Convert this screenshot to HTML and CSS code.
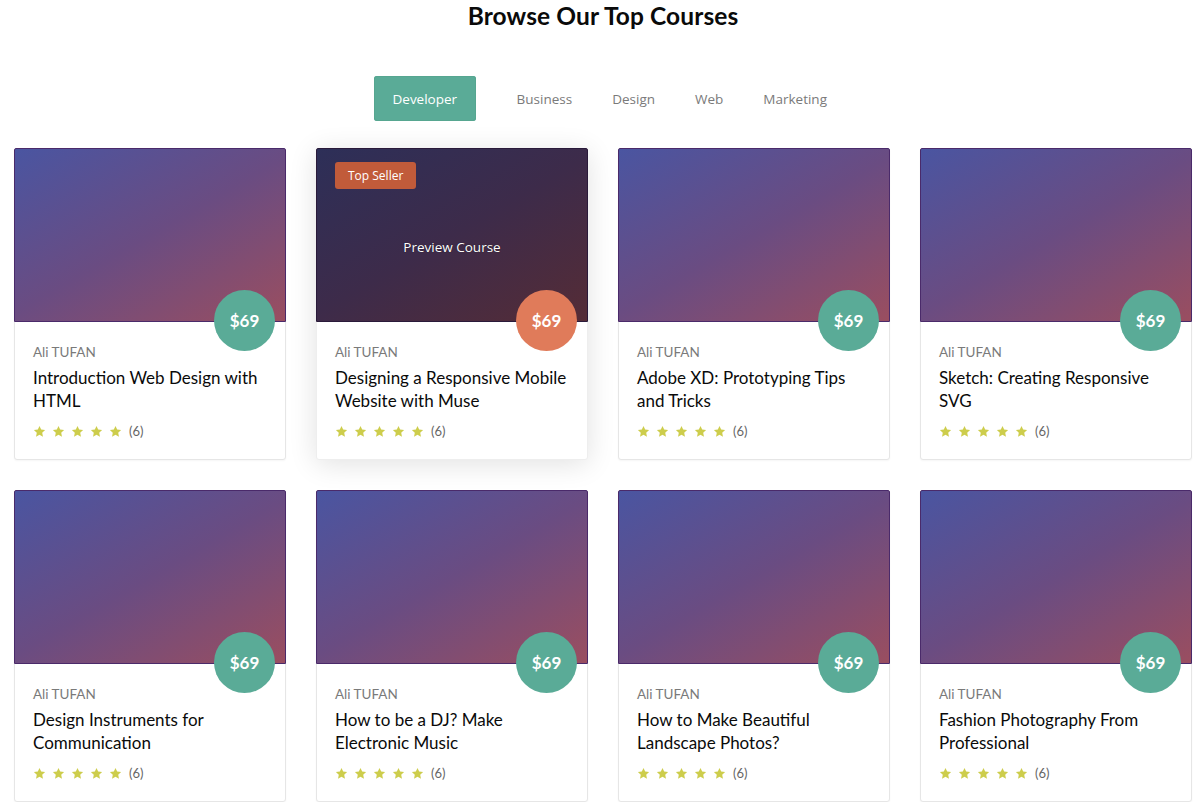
FILE: index.html
```html
<!DOCTYPE html>
<html lang="en">
<head>
<meta charset="utf-8">
<title>Browse Our Top Courses</title>
<link rel="stylesheet" href="styles.css">
</head>
<body>
<svg width="0" height="0" class="defs" aria-hidden="true">
  <defs>
    <symbol id="star" viewBox="0 0 24 24"><path d="M12 1.8l3.1 6.6 7.2.9-5.3 5 1.4 7.2L12 18l-6.4 3.5 1.4-7.2-5.3-5 7.2-.9z"/></symbol>
  </defs>
</svg>
<section class="courses">
  <h2 class="heading">Browse Our Top Courses</h2>
  <nav class="tabs">
    <a class="tab active">Developer</a>
    <a class="tab">Business</a>
    <a class="tab">Design</a>
    <a class="tab">Web</a>
    <a class="tab">Marketing</a>
  </nav>
  <div class="grid">
    <article class="card">
      <div class="thumb"><span class="price">$69</span></div>
      <div class="body">
        <p class="author">Ali TUFAN</p>
        <h3 class="title">Introduction Web Design with HTML</h3>
        <div class="rating"><span class="stars"><svg><use href="#star"/></svg><svg><use href="#star"/></svg><svg><use href="#star"/></svg><svg><use href="#star"/></svg><svg><use href="#star"/></svg></span><span class="count">(6)</span></div>
      </div>
    </article>
    <article class="card hover">
      <div class="thumb"><span class="badge">Top Seller</span><span class="preview">Preview Course</span><span class="price orange">$69</span></div>
      <div class="body">
        <p class="author">Ali TUFAN</p>
        <h3 class="title">Designing a Responsive Mobile Website with Muse</h3>
        <div class="rating"><span class="stars"><svg><use href="#star"/></svg><svg><use href="#star"/></svg><svg><use href="#star"/></svg><svg><use href="#star"/></svg><svg><use href="#star"/></svg></span><span class="count">(6)</span></div>
      </div>
    </article>
    <article class="card">
      <div class="thumb"><span class="price">$69</span></div>
      <div class="body">
        <p class="author">Ali TUFAN</p>
        <h3 class="title">Adobe XD: Prototyping Tips and Tricks</h3>
        <div class="rating"><span class="stars"><svg><use href="#star"/></svg><svg><use href="#star"/></svg><svg><use href="#star"/></svg><svg><use href="#star"/></svg><svg><use href="#star"/></svg></span><span class="count">(6)</span></div>
      </div>
    </article>
    <article class="card">
      <div class="thumb"><span class="price">$69</span></div>
      <div class="body">
        <p class="author">Ali TUFAN</p>
        <h3 class="title">Sketch: Creating Responsive SVG</h3>
        <div class="rating"><span class="stars"><svg><use href="#star"/></svg><svg><use href="#star"/></svg><svg><use href="#star"/></svg><svg><use href="#star"/></svg><svg><use href="#star"/></svg></span><span class="count">(6)</span></div>
      </div>
    </article>
    <article class="card">
      <div class="thumb"><span class="price">$69</span></div>
      <div class="body">
        <p class="author">Ali TUFAN</p>
        <h3 class="title">Design Instruments for Communication</h3>
        <div class="rating"><span class="stars"><svg><use href="#star"/></svg><svg><use href="#star"/></svg><svg><use href="#star"/></svg><svg><use href="#star"/></svg><svg><use href="#star"/></svg></span><span class="count">(6)</span></div>
      </div>
    </article>
    <article class="card">
      <div class="thumb"><span class="price">$69</span></div>
      <div class="body">
        <p class="author">Ali TUFAN</p>
        <h3 class="title">How to be a DJ? Make Electronic Music</h3>
        <div class="rating"><span class="stars"><svg><use href="#star"/></svg><svg><use href="#star"/></svg><svg><use href="#star"/></svg><svg><use href="#star"/></svg><svg><use href="#star"/></svg></span><span class="count">(6)</span></div>
      </div>
    </article>
    <article class="card">
      <div class="thumb"><span class="price">$69</span></div>
      <div class="body">
        <p class="author">Ali TUFAN</p>
        <h3 class="title">How to Make Beautiful Landscape Photos?</h3>
        <div class="rating"><span class="stars"><svg><use href="#star"/></svg><svg><use href="#star"/></svg><svg><use href="#star"/></svg><svg><use href="#star"/></svg><svg><use href="#star"/></svg></span><span class="count">(6)</span></div>
      </div>
    </article>
    <article class="card">
      <div class="thumb"><span class="price">$69</span></div>
      <div class="body">
        <p class="author">Ali TUFAN</p>
        <h3 class="title">Fashion Photography From Professional</h3>
        <div class="rating"><span class="stars"><svg><use href="#star"/></svg><svg><use href="#star"/></svg><svg><use href="#star"/></svg><svg><use href="#star"/></svg><svg><use href="#star"/></svg></span><span class="count">(6)</span></div>
      </div>
    </article>
  </div>
</section>
</body>
</html>
```
FILE: styles.css
```css
* { box-sizing: border-box; }
html, body { margin: 0; padding: 0; background: #fff; }
body {
  font-family: "Lato", "Noto Sans", sans-serif;
  color: #0a0a0a;
}
.defs { position: absolute; width: 0; height: 0; overflow: hidden; }
.courses { padding: 2px 8px 0 14px; }
.heading {
  margin: 0;
  text-align: center;
  font-size: 24.5px;
  font-weight: 700;
  line-height: 28px;
  letter-spacing: 0.1px;
}
.tabs {
  display: flex;
  justify-content: center;
  margin-top: 46px;
  padding-left: 15px;
}
.tab {
  font-family: "Open Sans", sans-serif;
  font-size: 13.5px;
  color: #7a7a7a;
  padding: 0 20px;
  height: 45px;
  line-height: 46px;
  border-radius: 3px;
}
.tab.active {
  background: #5aab97;
  color: #fff;
  padding: 0 18.5px;
  margin-right: 21px;
  box-shadow: 0 0 0 1px #56a690 inset;
}
.grid {
  margin-top: 27px;
  display: grid;
  grid-template-columns: repeat(4, 1fr);
  gap: 30px;
}
.card {
  border: 1px solid #e6e6e6;
  border-radius: 3px;
  background: #fff;
  box-shadow: 0 1px 2px rgba(0,0,0,0.04);
  height: 312px;
}
.card.hover {
  border-color: #eee;
  box-shadow: 0 4px 28px rgba(0,0,0,0.12);
}
.thumb {
  position: relative;
  height: 174px;
  background: linear-gradient(150deg, #4a55a1 0%, #6a4c82 50%, #9a4e60 100%);
  border: 1px solid #4a2a6a;
  border-radius: 2px 2px 0 0;
  margin: -1px -1px 0 -1px;
  display: flex;
  align-items: center;
  justify-content: center;
}
.card.hover .thumb {
  background: linear-gradient(150deg, #2d2f58 0%, #3d2b4a 50%, #552c36 100%);
  border-color: #2a1a3a;
}
.price {
  position: absolute;
  right: 10px;
  bottom: -30px;
  width: 61px;
  height: 61px;
  border-radius: 50%;
  background: #5aab97;
  color: #fff;
  font-weight: 700;
  font-size: 17px;
  display: flex;
  align-items: center;
  justify-content: center;
}
.price.orange { background: #e07b5a; }
.badge {
  position: absolute;
  left: 18px;
  top: 13px;
  background: #c15b3a;
  color: #fff;
  font-family: "Open Sans", sans-serif;
  font-size: 12px;
  padding: 0 13px;
  height: 27px;
  line-height: 27px;
  border-radius: 3px;
}
.preview {
  font-family: "Open Sans", sans-serif;
  font-size: 13.5px;
  color: #fff;
  margin-top: 24px;
  text-shadow: 0 0 1px rgba(0,0,0,0.6);
}
.body { padding: 21px 18px 0 18px; }
.author {
  margin: 0;
  font-size: 13.5px;
  color: #7a7a7a;
  line-height: 18px;
}
.title {
  margin: 5px 0 0;
  font-size: 17px;
  font-weight: 400;
  line-height: 23px;
  color: #0a0a0a;
  height: 46px;
}
.rating {
  margin-top: 11px;
  display: flex;
  align-items: center;
  gap: 7px;
}
.stars { display: flex; gap: 6px; }
.stars svg { width: 13px; height: 13px; fill: #cdcd4c; display: block; }
.count { font-size: 13px; color: #666; }
```
